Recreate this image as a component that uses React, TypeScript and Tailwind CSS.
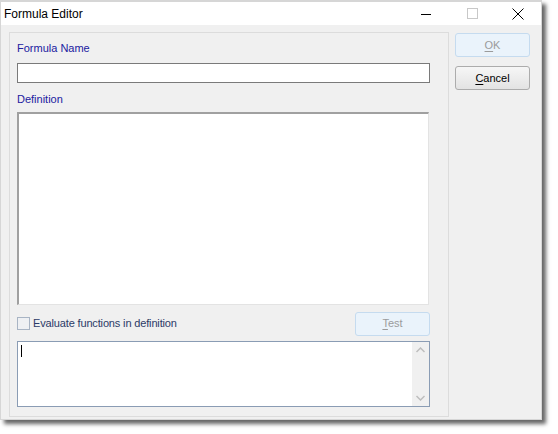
import React from 'react';

const font = { fontFamily: '"Liberation Sans", Arial, sans-serif' };

function TitleButtons() {
  return (
    <div className="flex h-full">
      <div className="flex w-[46px] items-center justify-center">
        <svg width="10" height="10" viewBox="0 0 10 10">
          <line x1="0" y1="5.5" x2="10" y2="5.5" stroke="#000" strokeWidth="1" />
        </svg>
      </div>
      <div className="flex w-[46px] items-center justify-center">
        <svg width="11" height="11" viewBox="0 0 11 11">
          <rect x="0.5" y="0.5" width="10" height="10" fill="none" stroke="#c8c8c8" strokeWidth="1" />
        </svg>
      </div>
      <div className="flex w-[46px] items-center justify-center">
        <svg width="12" height="12" viewBox="0 0 12 12">
          <path d="M0.5 0.5 L11.5 11.5 M11.5 0.5 L0.5 11.5" stroke="#000" strokeWidth="1" fill="none" />
        </svg>
      </div>
    </div>
  );
}

function DisabledButton({ accel, rest, className }: { accel: string; rest: string; className?: string }) {
  return (
    <div
      className={`flex h-[24px] w-[75px] items-center justify-center rounded-[3px] border border-[#c5dbef] bg-[#eaf3fb] text-[11px] text-[#9b9b9b] ${className ?? ''}`}
    >
      <span>
        <span className="underline underline-offset-2">{accel}</span>
        {rest}
      </span>
    </div>
  );
}

export default function App() {
  return (
    <div className="h-[434px] w-[558px] bg-white" style={font}>
      <div className="flex h-[420px] w-[542px] flex-col border-l border-t-2 border-r border-b border-[#d6d6d6] bg-[#f0f0f0] shadow-[4px_4px_4px_rgba(0,0,0,0.6)]">
        {/* title bar */}
        <div className="flex h-[23px] items-center justify-between bg-white">
          <span className="pl-[3px] text-[12px] text-black">Formula Editor</span>
          <TitleButtons />
        </div>

        <div className="flex flex-1 pl-[8px] pt-[7px]">
          {/* group panel */}
          <div className="flex h-[385px] w-[440px] flex-col border border-[#dcdcdc] pl-[7px] pr-[18px] pt-[9px]">
            <div className="h-[13px] text-[11px] leading-[13px] text-[#2020a0]">Formula Name</div>
            <div className="mt-[8px] h-[20px] w-[413px] border border-[#7a7a7a] bg-white" />

            <div className="mt-[10px] h-[13px] text-[11px] leading-[13px] text-[#2020a0]">Definition</div>
            <div className="mt-[6px] h-[193px] w-[412px] border border-t-2 border-l-2 border-[#a0a0a0] border-r-[#e3e3e3] border-b-[#e3e3e3] bg-white" />

            <div className="mt-[7px] flex h-[23px] w-[413px] items-center justify-between">
              <div className="flex items-center gap-[3px]">
                <div className="h-[13px] w-[13px] border border-[#a8b4c4] bg-[#eef0f3]" />
                <span className="text-[11px] tracking-[-0.15px] text-[#2b3a67]">Evaluate functions in definition</span>
              </div>
              <DisabledButton accel="T" rest="est" className="h-[23px]" />
            </div>

            <div className="mt-[6px] flex h-[66px] w-[413px] border border-[#8a9cb4] bg-white">
              <div className="flex-1 pl-[3px] pt-[3px]">
                <div className="h-[12px] w-[1px] bg-black" />
              </div>
              <div className="flex w-[17px] flex-col items-center justify-between bg-[#f0f0f0] py-[5px]">
                <svg width="9" height="6" viewBox="0 0 9 6">
                  <path d="M0.5 5 L4.5 1 L8.5 5" stroke="#bdbdbd" strokeWidth="1.5" fill="none" />
                </svg>
                <svg width="9" height="6" viewBox="0 0 9 6">
                  <path d="M0.5 1 L4.5 5 L8.5 1" stroke="#bdbdbd" strokeWidth="1.5" fill="none" />
                </svg>
              </div>
            </div>
          </div>

          {/* right buttons */}
          <div className="ml-[6px] flex flex-col gap-[9px] pt-[1px]">
            <DisabledButton accel="O" rest="K" />
            <div className="flex h-[24px] w-[75px] items-center justify-center rounded-[3px] border border-[#acacac] bg-gradient-to-b from-[#f6f6f6] to-[#e3e3e3] text-[11px] text-black">
              <span>
                <span className="underline underline-offset-2">C</span>ancel
              </span>
            </div>
          </div>
        </div>
      </div>
    </div>
  );
}
